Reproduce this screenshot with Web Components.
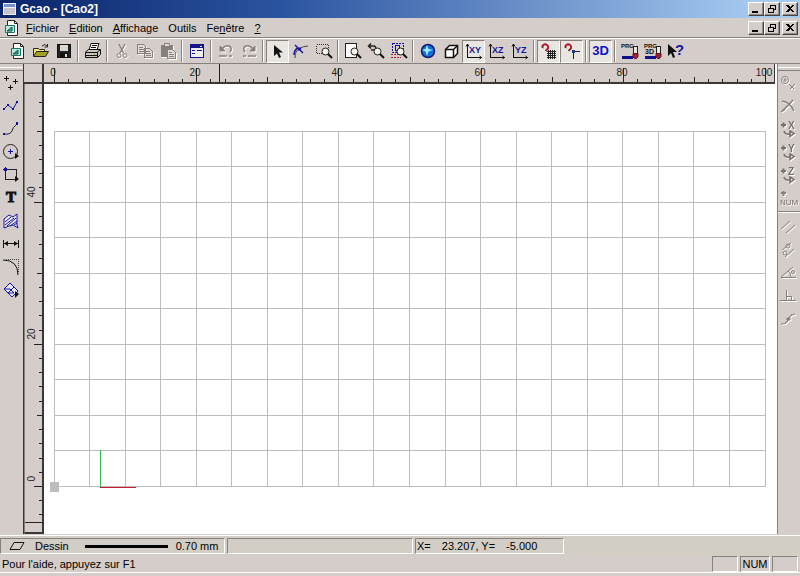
<!DOCTYPE html>
<html lang="fr">
<head>
<meta charset="utf-8">
<title>Gcao - [Cao2]</title>
<style>
html,body{margin:0;height:100%}
body{font:11px/14px "Liberation Sans",Arial,sans-serif;color:#000;overflow:hidden;
--face:#d5cdc9;--light:#fff;--shade:#87817d;--dark:#3c3838}
</style>
</head>
<body>
<gcao-app></gcao-app>
<script>
const magnifier='<circle cx="9.500" cy="8.500" r="3.500" fill="#f4f4f0" stroke="#222"/><path d="M12 11l4 4" stroke="#111" stroke-width="2"/>';
const label=(t,x,y,size,fill)=>`<text x="${x}" y="${y}" font-size="${size}" font-weight="bold" fill="${fill}" stroke="none">${t}</text>`;
const prg=t=>label('PRG',-1,5,6,'#111')+t+'<g class="px"><path d="M0 14h11" stroke="#10108c" stroke-width="3"/><path d="M11.500 12V3.500h4V12" fill="#e8e4e0" stroke="#222"/></g><path d="M11 10.500h5v3l-1.500 2h-2L11 14z" fill="#a02030" stroke="#601020"/>';
const magnet='<path d="M1.500 4.500C1 1.500 4 .5 6 2s1.500 4-1 5" stroke="#b01828" stroke-width="2"/><path d="M1 4l1.500 1M4 7l1.500 1" stroke="#222"/>';
const axis=l=>'<path class="px" d="M1.500 1v13.500H16" stroke="#111"/><path d="M0 3.500L1.500 1 3 3.500M13.500 13l2 1.500-2 1.500" stroke="#111"/>'+label(l,3,10,9,'#14149a');
const doc='<path d="M3.500.5h7l3 3v12h-10z" fill="#fff" stroke="#222"/><path d="M10.500.5v3h3" stroke="#222"/><path d="M1.500 5.500h9v7h-9z" fill="#bde5dc" stroke="#197562"/><path d="M3 11l5-4v4z" fill="#28a080" stroke="#15604c"/>';
const plusLetter=l=>'<path d="M1 4h5M3.500 1.500v5" stroke="#77706d" stroke-width="2"/>'+label(l,8,8,10,'#77706d')+'<path d="M4 10q1 4 7 3M10 10l4 2.500-4 3z" stroke="#77706d" stroke-width="1.500"/>';
const ICONS={
 nouveau:doc,
 ouvrir:'<path d="M.5 13V5.500h5l1 1h5V9" fill="#eee98a" stroke="#222"/><path d="M.5 13.500l3-5h12l-3 5z" fill="#a3a127" stroke="#222"/><path d="M9 3q3-3 5 0M14.500 1v3h-3" stroke="#222"/>',
 enregistrer:'<g class="px"><path d="M1.500 1.500h13v13h-13z" fill="#24231f" stroke="#111"/><path d="M4 2h8v6H4z" fill="#d8d8ce"/><path d="M4 10h8v5H4z" fill="#111"/><path d="M9 11h2v3H9z" fill="#ddd"/></g>',
 imprimer:'<path d="M4 7l2-6.500h8L12 7" fill="#fff" stroke="#111"/><path d="M.5 9l3-2.500h12v5l-3 3H.5z" fill="#c8c5b9" stroke="#111"/><path d="M.5 9.500H12l3.500-3M.5 12.500H12M12.500 9v5.500M7 2.500h5M6 4.500h5" stroke="#111"/><path d="M8 11h2" stroke="#c2b221"/>',
 couper:'<path d="M5 1l4.500 9M11 1L6 10" stroke-width="1.500"/><circle cx="5" cy="12.500" r="2"/><circle cx="11" cy="12.500" r="2"/>',
 copier:'<g class="px"><path d="M.5 1.500h6l2 2v7h-8zM7.500 5.500h5l3 3v6h-8z" fill="#e0dbd7"/><path d="M2 4.500h4M2 6.500h5M2 8.500h5M9 8.500h4M9 10.500h5M9 12.500h5"/></g>',
 coller:'<g class="px"><path d="M1.500 2.500h11v11h-11z" fill="#87817d"/><path d="M4.500.5h5v3h-5zM7.500 6.500h5l3 3v6h-8z" fill="#e0dbd7"/><path d="M9 9.500h3M9 11.500h5M9 13.500h5"/></g>',
 proprietes:'<g class="px"><path d="M1.500 1.500h13v13h-13z" fill="#eeedf5" stroke="#14148c"/><path d="M2 3h12" stroke="#14148c" stroke-width="3"/><path d="M3 7.500h3M3 10.500h3M8 7.500h5" stroke="#14148c"/><path d="M11 3h2" stroke="#fff"/></g>',
 annuler:'<path d="M4 6q3-4 7-3 4 2 1 6M9 13H1M11 13h3" stroke-width="1.500"/><path d="M2 3v5h5z" fill="#87817d"/>',
 retablir:'<path d="M12 6Q9 2 5 3 1 5 4 9M7 13h8M5 13H2" stroke-width="1.500"/><path d="M14 3v5H9z" fill="#87817d"/>',
 selection:'<path d="M4 2v11l3-2.500 2 4.500 2-1-2-4.500h4z" fill="#111"/>',
 noeuds:'<path d="M2 15q0-7 4-9 4-3 9-3" stroke="#444"/><path d="M2 2l8 8" stroke="#14149a" stroke-width="1.500"/><path d="M1 12q0-5 4-7" stroke="#14149a" stroke-width="1.500"/><path d="M5 4.500h3v3H5z" fill="#14149a"/>',
 zonesel:'<path class="px" d="M.5 1.500h12v9H.5z" stroke="#333" stroke-dasharray="1 1"/>'+magnifier,
 pagezoom:'<path class="px" d="M.5.5h11v14H.5z" fill="#fff" stroke="#222"/>'+magnifier,
 zoomprec:'<path d="M1 3h5q3 1 1 4H3M3 .5L.5 3 3 5.500" stroke="#222" stroke-width="1.500"/>'+magnifier,
 zoomtout:'<g class="px"><path d="M1.500.5h11v9h-11z" stroke="#14149a" stroke-dasharray="2 1"/><path d="M4.500 2.500h4v5h-4z" stroke="#14149a"/><path d="M0 11.500h10M0 14.500h10" stroke="#b02035" stroke-dasharray="2 1"/></g>'+magnifier,
 rendu:'<circle cx="8" cy="8" r="6.500" fill="#1070d8" stroke="#101875" stroke-width="1.500"/><path d="M7 2l1.500 4L13 7 8.500 8.500 7 13 5.500 8.500 2 7l3.500-1z" fill="#9cecff"/>',
 cube:'<path d="M2.500 6.500l4-4h8v8l-4 4h-8z" fill="#fff" stroke="#111" stroke-width="1.500"/><path d="M2.500 6.500h8v8M10.500 6.500l4-4" stroke="#111" stroke-width="1.500"/>',
 planxy:axis('XY'),planxz:axis('XZ'),planyz:axis('YZ'),
 grille:magnet+'<path class="px" d="M7.500 7v9M9.500 7v9M11.500 7v9M13.500 7v9M6 8.500h9M6 10.500h9M6 12.500h9M6 14.500h9" stroke="#222"/>',
 accroche:magnet+'<path class="px" d="M9.500 16V8.500H16" stroke="#222"/><path d="M8 7h3v3H8z" fill="#1a3d84"/>',
 prg:prg(''),prg3d:prg(label('3D',0,11,7,'#111')),
 aide:'<path d="M0 1v12l3-3 2 5 2-1-2-5h4z" fill="#111"/>'+label('?',7,12,15,'#18189e'),
 points:'<path class="px" d="M1 3.500h5M3.500 1v5M10 6.500h5M12.500 4v5M5 12.500h5M7.500 10v5" stroke="#111"/>',
 polyligne:'<path d="M1 11l4-4 5 4 4-7" stroke="#14149a"/><path d="M0 10h2v2H0zM4 6h2v2H4zM9 10h2v2H9zM13 3h2v2h-2z" fill="#14149a"/>',
 courbe:'<path d="M1 13q6 1 8-3 0-3 5-7" stroke="#222"/><path d="M0 12h2v2H0zM13 1h2v3h-2z" fill="#14149a"/>',
 cercle:'<circle cx="7.500" cy="7.500" r="7" stroke="#222"/><path d="M5 7.500h5M7.500 5v5" stroke="#14149a"/><path d="M12 9v6l4-3z" fill="#111"/>',
 rectangle:'<path class="px" d="M2.500 0v12.500H13V2.500H0" stroke="#222"/><path d="M1 1h3v3H1z" fill="#14149a"/><path d="M12 9v6l4-3z" fill="#111"/>',
 hachure:'<path d="M1 6l5-4 4 2 4-3v11l1 3-5-3-4 1-5 2z" fill="#ecebf7" stroke="#14149a"/><path d="M2 9l6-5M2 12l9-7M4 13l9-8M7 13l7-5M11 12l3-2" stroke="#14149a"/>',
 cote:'<path class="px" d="M.5 4v8M15.500 4v8M1 7.500h14" stroke="#111"/><path d="M5 5v5L1 7.500zM11 5v5l4-2.500z" fill="#111"/>',
 conge:'<path d="M0 1q15 0 15 15" stroke="#111"/><path class="px" d="M3 .5h12.500v12" stroke="#444" stroke-dasharray="1 1"/>',
 transformer:'<path d="M1 7l6-6 4 4-6 6zM5 11l6-6 4 4-6 6z" fill="#e8e7f0" stroke="#14149a"/><path d="M1 7l4 4h6l-4-4z" stroke="#14149a"/><path d="M12 9v7l4-4z" fill="#111"/>',
 accpoint:'<circle cx="5" cy="5" r="3.500"/><path d="M3 5h4M5 3v4M9 9l5 5M10 14l5-5"/>',
 intersection:'<path d="M1 14Q9 7 13 2M2 3q8 1 12 10M3 13l2-2" stroke-width="1.500"/>',
 plusx:plusLetter('X'),plusy:plusLetter('Y'),plusz:plusLetter('Z'),
 plusnum:'<path d="M1 3h5M3.500 1v5" stroke-width="2"/><text x="0" y="15" font-size="8" fill="#77706d" stroke="none">NUM</text>',
 parallele:'<path d="M1 10l9-8M6 14l9-8"/>',
 tangente:'<circle cx="8" cy="4" r="2"/><circle cx="5" cy="11" r="2"/><path d="M2 8l9-7M5 15l9-8"/>',
 angle:'<path d="M1 12.500h15M1 12L13 2M8 6q3 2 3 6"/><circle cx="13" cy="7" r="1.500"/>',
 perpendiculaire:'<path class="px" d="M0 12.500h16M6.500 2v10M7 8.500h4v4"/>',
 tangcourbe:'<path d="M1 13q7 0 8-6 1-3 6-4M5 13l7-10"/><path d="M7 7h3v2H7z" fill="#87817d"/>'
};
const svg=(n)=>`<svg viewBox="0 0 16 16" width="16" height="16" aria-hidden="true" fill="none" stroke="none">${ICONS[n]}</svg>`;

function define(name,css,html,setup){
 const t=document.createElement('template');
 t.innerHTML=`<style>*{box-sizing:border-box}button{font:inherit;color:inherit;margin:0;padding:0;border:0;background:none}${css}</style>${html}`;
 customElements.define(name,class extends HTMLElement{
  connectedCallback(){
   if(this.shadowRoot)return;
   this.attachShadow({mode:'open'}).append(t.content.cloneNode(true));
   if(setup)setup(this,this.shadowRoot);
  }
 });
}

define('gcao-tool',`:host{display:block;width:var(--tool,23px);height:23px}
button{width:100%;height:100%;display:grid;place-items:center;border:1px solid transparent}
button[aria-pressed=true]{background:#e9e6e2;border-color:var(--shade) #fff #fff var(--shade)}
svg{overflow:visible}
.px{shape-rendering:crispEdges}.off svg{stroke:#87817d;filter:drop-shadow(1px 1px 0 #fff)}
b{font-size:13px;color:#1111c4}b.t{font:bold 15px "Liberation Serif",serif;color:#111;-webkit-text-stroke:1px #111}`,
'<button type="button"></button>',(el,r)=>{
 const b=r.querySelector('button'),i=el.getAttribute('icon');
 b.setAttribute('aria-label',el.getAttribute('label')||i);
 if(el.hasAttribute('pressed'))b.setAttribute('aria-pressed','true');
 if(el.hasAttribute('off'))b.classList.add('off');
 b.innerHTML=i==='3D'?'<b>3D</b>':i==='T'?'<b class="t">T</b>':svg(i);
});

define('gcao-toolbar',`:host{display:flex;align-items:center;background:var(--face)}
:host([vertical]){flex-direction:column;align-items:flex-start}
hr{margin:0 2px;width:2px;height:22px;flex:none;border:0;border-left:1px solid var(--shade);border-right:1px solid #fff}
:host([vertical]) hr{margin:2px 0;width:100%;height:2px;border:0;border-top:1px solid var(--shade);border-bottom:1px solid #fff}`,
'',(el,r)=>{
 const off=el.hasAttribute('off');
 el.getAttribute('items').split(' ').forEach(s=>{
  if(s==='|'){r.append(document.createElement('hr'));return}
  const t=document.createElement('gcao-tool');
  t.setAttribute('icon',s.replace(/[!-]$/,''));
  if(s.endsWith('!'))t.setAttribute('pressed','');
  if(off||s.endsWith('-'))t.setAttribute('off','');
  r.append(t);
 });
});

define('window-buttons',`:host{display:flex;flex:none;padding-right:2px}
button{width:16px;height:14px;background:var(--face);border:1px solid;border-color:#fff #444 #444 #fff;box-shadow:inset -1px -1px #918b87;display:grid;place-items:center}
.close{margin-left:2px}svg{shape-rendering:crispEdges}`,
`<button type="button" aria-label="Réduire"><svg width="12" height="10"><path d="M2 7h6v2H2z"/></svg></button>
<button type="button" aria-label="Restaurer"><svg width="12" height="10" fill="none" stroke="#000"><path d="M4 1h6M4 1.500h5.500v4H8M4.500 1v3M2 4h6M2.500 4v4.500h5V4"/></svg></button>
<button type="button" class="close" aria-label="Fermer"><svg width="12" height="10"><path d="M2 1h2l2 2 2-2h2L7 4.500 10 8H8L6 6 4 8H2l3-3.500z"/></svg></button>`);

define('gcao-title',`:host{display:flex;align-items:center;gap:3px;height:18px;flex:none;padding-left:2px;color:#fff;background:linear-gradient(90deg,#0a246a,#2b54a0 35%,#a6caf0 95%)}
h1{flex:1;margin:0;font-size:12px;line-height:16px}svg{shape-rendering:crispEdges}`,
`<svg width="15" height="14" aria-hidden="true"><path d="M1 1h13v12H1z" fill="#f1f0f4"/><path d="M2 2h11v3H2z" fill="#7892ce"/><path d="M2 6h11v6H2z" fill="#c8c3cf"/></svg><h1><slot></slot></h1><window-buttons></window-buttons>`);

define('gcao-menubar',`:host{display:flex;align-items:center;height:20px;flex:none;padding-left:4px;background:var(--face);border-bottom:1px solid var(--shade)}
nav{display:flex;gap:10px;margin-left:6px;flex:1;font-size:11px}svg{flex:none}`,
`<svg viewBox="0 0 16 16" width="16" height="16" fill="none" aria-hidden="true">${doc}</svg>
<nav aria-label="Menu"><button type="button"><u>F</u>ichier</button><button type="button"><u>E</u>dition</button><button type="button"><u>A</u>ffichage</button><button type="button">Outils</button><button type="button">Fe<u>n</u>être</button><button type="button"><u>?</u></button></nav><window-buttons></window-buttons>`);

const UNIT=7.11,OX=10,OY=402;
define('gcao-ruler',`:host{display:block;overflow:hidden;background:var(--face);min-width:0;min-height:0}
:host([axis=x]){border-bottom:2px solid var(--dark);border-right:1px solid var(--dark)}
:host([axis=y]){border-right:2px solid var(--dark);border-left:1px solid var(--shade);border-bottom:2px solid var(--dark)}
svg{display:block;width:100%;height:100%}path{stroke:#222;shape-rendering:crispEdges}text{font-size:10px;fill:#222}`,
'<svg role="img" aria-label="Règle"></svg>',(el,r)=>{
 const x=el.getAttribute('axis')==='x';let d='',t='';
 for(let u=x?0:-4;u<=(x?100:54);u+=2){
  const len=u%20===0?(x?15:9):u%10===0?6:4;
  const p=Math.round(x?OX+u*UNIT:OY-u*UNIT)+.5;
  d+=x?`M${p} ${19-len}V19`:`M${18-len} ${p}H18`;
  if(u%20===0)t+=x?`<text x="${Math.floor(p)-1}" y="12" text-anchor="middle">${u}</text>`:`<text transform="translate(10 ${p-5}) rotate(-90)">${u}</text>`;
 }
 d+=x?'M175.500 0V19':'M0 438.500H18';
 r.querySelector('svg').innerHTML=`<path d="${d}"/>${t}`;
});

define('gcao-drawing',`:host{display:block;background:#fff;overflow:hidden;min-width:0;min-height:0}
svg{display:block;width:100%;height:100%;shape-rendering:crispEdges}`,
'<svg role="img" aria-label="Dessin"></svg>',(el,r)=>{
 let d='';
 for(let i=0;i<=100;i+=5){const p=Math.floor(OX+i*UNIT)+.5;d+=`M${p} 47V403`}
 for(let i=0;i<=50;i+=5){const p=Math.round(OY-i*UNIT)+.5;d+=`M10 ${p}H722`}
 r.querySelector('svg').innerHTML=`<path d="${d}" stroke="#bdbdbd"/><path d="M6 398h9v10H6z" fill="#bdbdbd"/><path d="M56 366h1v37h-1z" fill="#35b84c"/><path d="M56 403h36v1H56z" fill="#c41c2c"/>`;
});

define('status-cell',`:host{display:flex;align-items:center;height:16px;border:1px solid;border-color:var(--shade) #fff #fff var(--shade);white-space:nowrap;flex:none}`,'<slot></slot>');

define('gcao-status',`:host{display:block;flex:none;background:var(--face);border-top:1px solid #fff}
.row{display:flex;gap:2px;align-items:center}
.top{padding:2px 0;background:#d2cec6}.style{width:225px;padding-left:8px;gap:10px}.empty{width:186px}.xy{width:149px;padding-left:1px;gap:11px}
.line{width:83px;height:3px;background:#000;margin:0 -2px 0 6px}
.bottom{padding:0 2px}.bottom p{flex:1;margin:0}.lock{width:26px}.num{width:30px;justify-content:center}
.edge{height:4px;border-top:1px solid #fff;background:var(--face)}svg{flex:none}`,
`<div class="row top"><status-cell class="style"><svg width="16" height="10" fill="none" stroke="#111"><path d="M1 8.500L5 1.500h10l-4 7z"/></svg><span>Dessin</span><i class="line"></i><span>0.70 mm</span></status-cell><status-cell class="empty"></status-cell><status-cell class="xy"><span>X=</span><span>23.207, Y=</span><span>-5.000</span></status-cell></div>
<div class="row bottom"><p>Pour l'aide, appuyez sur F1</p><status-cell class="lock"></status-cell><status-cell class="num">NUM</status-cell><status-cell class="lock"></status-cell></div><div class="edge"></div>`);

define('gcao-app',`:host{display:flex;flex-direction:column;height:100vh;background:var(--face)}
.main{height:26px;flex:none;padding-left:6px;border-top:1px solid #fff;border-bottom:1px solid var(--shade)}
.work{flex:1;min-height:0;display:grid;grid-template-columns:24px minmax(0,1fr) 23px;border-bottom:1px solid var(--face)}
.side{--tool:22px;padding-top:3px;border-right:1px solid var(--dark)}
.right{--tool:20px;border:0;border-left:1px solid var(--shade)}
.side::before{content:"";width:100%;height:2px;flex:none;border-top:1px solid #fff;border-bottom:1px solid var(--shade)}
.sheet{display:grid;grid-template:20px minmax(0,1fr)/20px minmax(0,1fr);padding-right:2px;background:#fff;min-height:0}
.corner{background:var(--face);border:solid var(--dark);border-width:0 2px 2px 0}`,
`<gcao-title>Gcao - [Cao2]</gcao-title>
<gcao-menubar></gcao-menubar>
<gcao-toolbar class="main" items="nouveau ouvrir enregistrer | imprimer | couper- copier- coller- | proprietes | annuler- retablir- | selection! noeuds zonesel | pagezoom zoomprec zoomtout | rendu cube planxy! planxz planyz | grille! accroche! | 3D! | prg prg3d aide"></gcao-toolbar>
<div class="work">
<gcao-toolbar vertical class="side" items="points polyligne courbe cercle rectangle T hachure cote conge transformer"></gcao-toolbar>
<div class="sheet"><div class="corner"></div><gcao-ruler axis="x"></gcao-ruler><gcao-ruler axis="y"></gcao-ruler><gcao-drawing></gcao-drawing></div>
<gcao-toolbar vertical off class="side right" items="accpoint intersection plusx plusy plusz plusnum | parallele tangente angle perpendiculaire tangcourbe"></gcao-toolbar>
</div>
<gcao-status></gcao-status>`);
</script>
</body>
</html>
